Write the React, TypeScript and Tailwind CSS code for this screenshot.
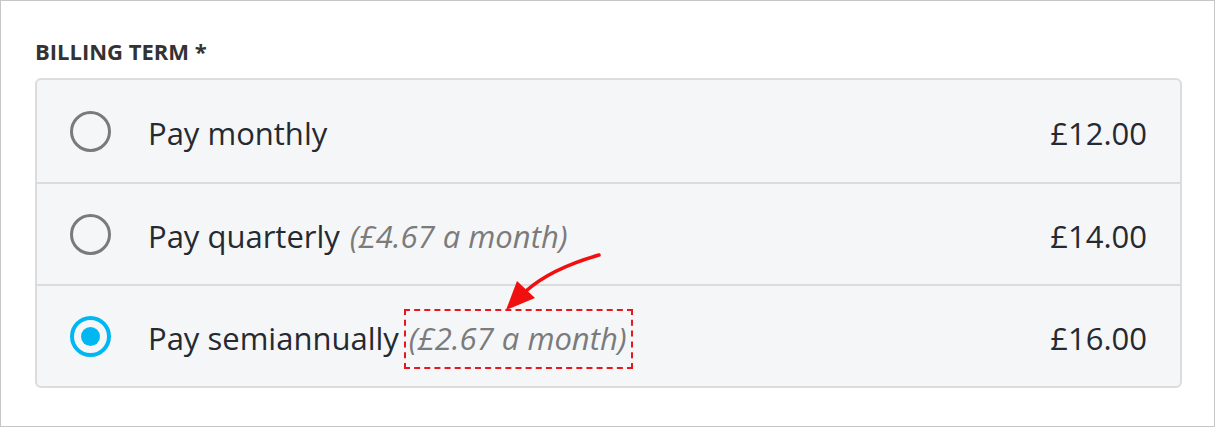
const terms = [
  { label: "Pay monthly", note: "", price: "£12.00", selected: false },
  { label: "Pay quarterly", note: "(£4.67 a month)", price: "£14.00", selected: false },
  { label: "Pay semiannually", note: "(£2.67 a month)", price: "£16.00", selected: true },
];

const Radio = ({ selected }: { selected: boolean }) =>
  selected ? (
    <div className="w-[41px] h-[41px] rounded-full border-[4px] border-[#00b7f1] flex items-center justify-center shrink-0">
      <div className="w-[19px] h-[19px] rounded-full bg-[#00b7f1]" />
    </div>
  ) : (
    <div className="w-[41px] h-[41px] rounded-full border-[3px] border-[#7a7a7a] shrink-0" />
  );

export default function App() {
  return (
    <div className="relative w-[1215px] h-[427px] border border-[#c6c6c6] bg-white px-[34px] pt-[34px] font-['Open_Sans',sans-serif] text-[#252a31]">
      <div className="text-[22px] font-bold text-[#333] leading-[32px] mb-[11px]">
        BILLING TERM *
      </div>
      <div className="w-[1147px] rounded-[6px] border-2 border-[#dcdcdc] bg-[#f5f6f8]">
        {terms.map((t, i) => (
          <div
            key={t.label}
            className={
              "h-[102px] flex items-center pl-[33px] pr-[33px] " +
              (i > 0 ? "border-t-2 border-[#dcdcdc]" : "")
            }
          >
            <Radio selected={t.selected} />
            <div className="ml-[37px] pt-[4px] flex items-center text-[31px] leading-none">
              <span>{t.label}</span>
              {t.note && i === 2 ? (
                <span className="relative ml-[10px] italic text-[#7b7b7b]">
                  {t.note}
                  <span className="absolute left-[-5px] right-[-6px] top-[-14px] bottom-[-15px] border-2 border-dashed border-[#e8171b]" />
                </span>
              ) : t.note ? (
                <span className="ml-[10px] italic text-[#7b7b7b]">{t.note}</span>
              ) : null}
            </div>
            <div className="ml-auto pt-[4px] text-[31px] leading-none">{t.price}</div>
          </div>
        ))}
      </div>
      <svg className="absolute left-0 top-0 pointer-events-none" width="1217" height="427">
        <path d="M598 254 C 570 262, 545 272, 525 290" fill="none" stroke="#f01010" strokeWidth="3.5" strokeLinecap="round" />
        <polygon points="505,309 516,280 534,297" fill="#f01010" />
      </svg>
    </div>
  );
}
